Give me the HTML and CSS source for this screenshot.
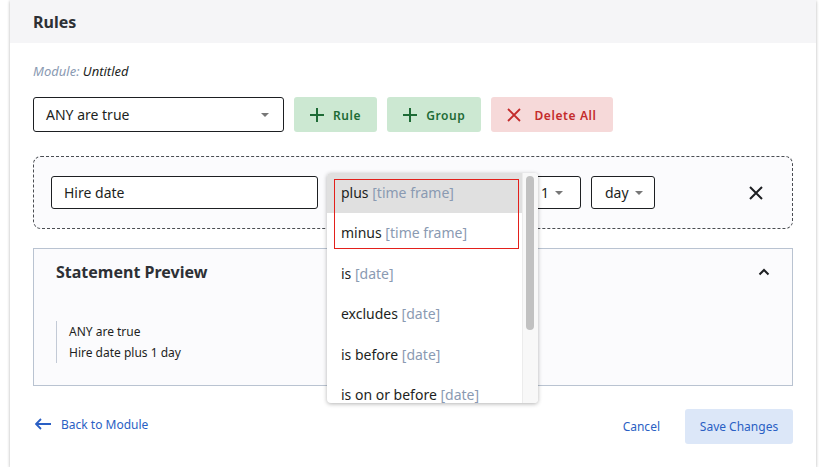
FILE: index.html
```html
<!DOCTYPE HTML>
<html>
	<head>
		<meta charset="utf-8">
		<link rel="stylesheet" href="styles.css">
	</head>
	<body>
		<div class="card">
			<div class="card-header">
				<h3>Rules</h3>
			</div>
			<div class="card-body">
				<div class="module"><span class="module-label">Module:</span> Untitled</div>

				<div class="toolbar">
					<div class="select select-main">
						<span>ANY are true</span>
						<span class="caret"></span>
					</div>
					<button class="btn btn-green">
						<svg width="14" height="14" viewBox="0 0 14 14"><path d="M7 0v14M0 7h14" stroke="currentColor" stroke-width="2"/></svg>
						Rule
					</button>
					<button class="btn btn-green">
						<svg width="14" height="14" viewBox="0 0 14 14"><path d="M7 0v14M0 7h14" stroke="currentColor" stroke-width="2"/></svg>
						Group
					</button>
					<button class="btn btn-red">
						<svg width="14" height="14" viewBox="0 0 14 14"><path d="M1 1l12 12M13 1L1 13" stroke="currentColor" stroke-width="1.8"/></svg>
						Delete All
					</button>
				</div>

				<div class="rule-box">
					<div class="input input-field">Hire date</div>
					<div class="input input-op"></div>
					<div class="input input-small input-num">
						<span>1</span>
						<span class="caret"></span>
					</div>
					<div class="input input-small input-unit">
						<span>day</span>
						<span class="caret"></span>
					</div>
					<div class="rule-close">
						<svg width="14" height="14" viewBox="0 0 14 14"><path d="M1 1l12 12M13 1L1 13" stroke="#1d1f22" stroke-width="2"/></svg>
					</div>

					<div class="dropdown">
						<ul class="dropdown-list">
							<li class="active">plus <span class="hint">[time frame]</span></li>
							<li>minus <span class="hint">[time frame]</span></li>
							<li>is <span class="hint">[date]</span></li>
							<li>excludes <span class="hint">[date]</span></li>
							<li>is before <span class="hint">[date]</span></li>
							<li>is on or before <span class="hint">[date]</span></li>
						</ul>
						<div class="scrollbar"><div class="thumb"></div></div>
						<div class="mark"></div>
					</div>
				</div>

				<div class="preview">
					<div class="preview-head">
						<h4>Statement Preview</h4>
						<svg width="12" height="8" viewBox="0 0 12 8"><path d="M1.5 6.5L6 2l4.5 4.5" fill="none" stroke="#1d1f22" stroke-width="2"/></svg>
					</div>
					<div class="quote">
						<div>ANY are true</div>
						<div>Hire date plus 1 day</div>
					</div>
				</div>

				<div class="footer">
					<a class="back">
						<svg width="16" height="12" viewBox="0 0 16 12"><path d="M6 1L1 6l5 5M1 6h15" fill="none" stroke="currentColor" stroke-width="1.8"/></svg>
						Back to Module
					</a>
					<div class="actions">
						<a class="cancel">Cancel</a>
						<button class="btn-save">Save Changes</button>
					</div>
				</div>
			</div>
		</div>
	</body>
</html>
```
FILE: styles.css
```css
body {
	margin: 0;
	background: #ffffff;
	font-family: "Noto Sans", "Open Sans", sans-serif;
	color: #1d1f22;
}

.card {
	margin-left: 10px;
	width: 806px;
	background: #ffffff;
	box-shadow: 0 1px 3px rgba(0, 0, 0, 0.3);
}

.card-header {
	height: 43px;
	background: #f5f5f7;
	padding-left: 23px;
	display: flex;
	align-items: center;
}

.card-header h3 {
	margin: 0;
	font-size: 16px;
	font-weight: 700;
	color: #2d3035;
}

.card-body {
	padding: 19px 23px 23px 23px;
}

.module {
	font-size: 13px;
	font-style: italic;
	line-height: 16px;
	color: #1d1f22;
	margin-top: 1px;
	margin-bottom: -1px;
}

.module-label {
	color: #8a9ab2;
}

.toolbar {
	display: flex;
	gap: 10px;
	margin-top: 19px;
}

.select {
	box-sizing: border-box;
	height: 35px;
	border: 1px solid #1d1f22;
	border-radius: 3px;
	display: flex;
	align-items: center;
	justify-content: space-between;
	font-size: 14px;
}

.select-main {
	width: 251px;
	padding: 0 14px 0 12px;
}

.caret {
	width: 0;
	height: 0;
	border-left: 4px solid transparent;
	border-right: 4px solid transparent;
	border-top: 4px solid #777777;
}

.btn {
	height: 35px;
	border: none;
	border-radius: 3px;
	display: flex;
	align-items: center;
	gap: 9px;
	font-family: "Noto Sans", sans-serif;
	font-size: 12px;
	font-weight: 600;
	letter-spacing: 0.6px;
	padding: 1px 16px 0 16px;
}

.btn-green {
	background: #cce8d2;
	color: #1e6b36;
}

.btn-red {
	background: #f6d9d9;
	color: #c42b2b;
	gap: 13px;
}

.rule-box {
	position: relative;
	margin-top: 24px;
	height: 73px;
	box-sizing: border-box;
	border: 1px dashed #4a4d52;
	border-radius: 8px;
	background: #fbfbfd;
	display: flex;
	align-items: center;
	padding-left: 17px;
}

.input {
	box-sizing: border-box;
	height: 33px;
	border: 1px solid #1d1f22;
	border-radius: 3px;
	display: flex;
	align-items: center;
	font-size: 14px;
	background: #ffffff;
}

.input-field {
	width: 267px;
	padding-left: 12px;
}

.input-op {
	width: 192px;
	margin-left: 9px;
}

.input-small {
	gap: 6px;
	margin-left: 10px;
}

.input-num {
	width: 52px;
	padding-left: 11px;
}

.input-unit {
	width: 64px;
	padding-left: 13px;
}

.rule-close {
	margin-left: 94px;
	display: flex;
}

.dropdown {
	position: absolute;
	left: 293px;
	top: 16px;
	width: 211px;
	height: 230px;
	background: #ffffff;
	border-radius: 4px;
	box-shadow: 0 1px 4px rgba(0, 0, 0, 0.3);
	overflow: hidden;
	z-index: 5;
}

.dropdown-list {
	list-style: none;
	margin: 0;
	padding: 0;
	width: 196px;
}

.dropdown-list li {
	height: 40.4px;
	line-height: 40px;
	padding-left: 14px;
	font-size: 14px;
	white-space: nowrap;
}

.dropdown-list li.active {
	background: #e0e0e0;
}

.hint {
	color: #8a9ab2;
}

.scrollbar {
	position: absolute;
	right: 0;
	top: 0;
	width: 15px;
	height: 100%;
	background: #f8f8f8;
	border-left: 1px solid #ececec;
}

.thumb {
	margin: 3px 0 0 3px;
	width: 8px;
	height: 154px;
	border-radius: 4px;
	background: #c1c1c1;
}

.mark {
	position: absolute;
	left: 7px;
	top: 6px;
	width: 183px;
	height: 68px;
	border: 1px solid #e3201b;
}

.preview {
	margin-top: 19px;
	height: 138px;
	box-sizing: border-box;
	border: 1px solid #b9c3d1;
	background: #fbfbfd;
	padding: 12px 22px 0 22px;
}

.preview-head {
	display: flex;
	align-items: center;
	justify-content: space-between;
}

.preview-head h4 {
	margin: 0;
	font-size: 16px;
	font-weight: 700;
	color: #2d3035;
}

.quote {
	margin-top: 38px;
	border-left: 1px solid #c3cad6;
	padding-left: 12px;
	font-size: 12px;
	line-height: 21px;
}

.footer {
	margin-top: 23px;
	display: flex;
	justify-content: space-between;
	align-items: center;
}

.back {
	display: flex;
	align-items: center;
	gap: 10px;
	padding-left: 2px;
	font-size: 12px;
	color: #2a5fc4;
	margin-top: -5px;
}

.actions {
	display: flex;
	align-items: center;
	gap: 25px;
}

.cancel {
	font-size: 12px;
	color: #2a5fc4;
}

.btn-save {
	height: 35px;
	width: 108px;
	border: none;
	border-radius: 3px;
	background: #dce7f8;
	color: #2a5fc4;
	font-family: "Noto Sans", sans-serif;
	font-size: 12px;
}
```
